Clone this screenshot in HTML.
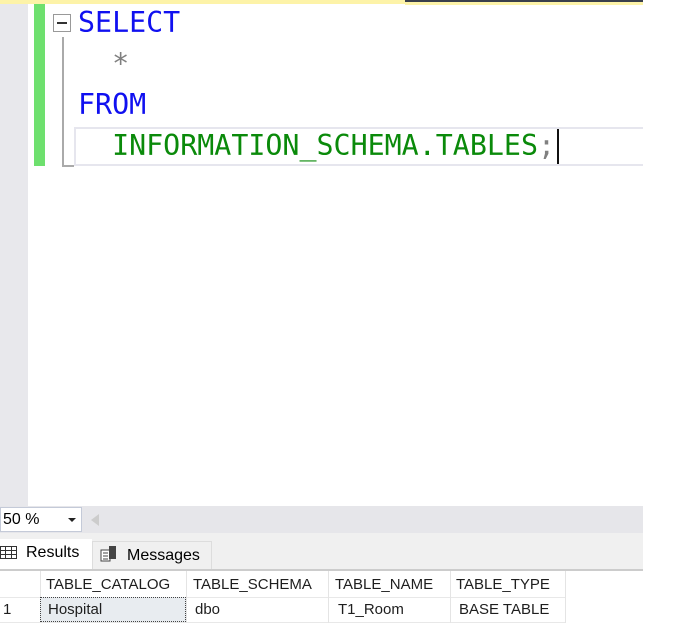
<!DOCTYPE html>
<html><head><style>
body{margin:0;width:678px;height:640px;background:#fff;position:relative;overflow:hidden;font-family:"Liberation Sans",sans-serif}
.a{position:absolute}
.code{font-family:"DejaVu Sans Mono","Liberation Mono",monospace;font-size:28.3px;white-space:pre;line-height:41px}
.cell{position:absolute;font-size:15px;color:#1e1e1e;line-height:25px}
</style></head><body>
<div class="a" style="left:0;top:0;width:405px;height:4px;background:#fdf3a8"></div>
<div class="a" style="left:405px;top:0;width:238px;height:2px;background:#3a3f4b"></div>
<div class="a" style="left:405px;top:2px;width:238px;height:3px;background:#fdf3a8"></div>
<div class="a" style="left:0;top:4px;width:28px;height:502px;background:#e8e8ec"></div>
<div class="a" style="left:34px;top:4px;width:11px;height:162px;background:#6ee06e"></div>
<div class="a" style="left:53px;top:14px;width:18px;height:18px;border:1px solid #999;box-sizing:border-box;background:#fff"></div>
<div class="a" style="left:57px;top:22px;width:10px;height:2px;background:#333"></div>
<div class="a" style="left:62px;top:37px;width:1.5px;height:129px;background:#aaa"></div>
<div class="a" style="left:62px;top:165px;width:12px;height:1.5px;background:#aaa"></div>
<div class="a" style="left:74px;top:127px;width:575px;height:39px;border:2px solid #e6e6ee;border-right:none;box-sizing:border-box;width:569px"></div>
<div class="a code" style="left:78px;top:2px;color:#1010f0">SELECT</div>
<div class="a code" style="left:78px;top:43px;color:#808080">  *</div>
<div class="a code" style="left:78px;top:84px;color:#1010f0">FROM</div>
<div class="a code" style="left:78px;top:125px;color:#0a8a0a">  INFORMATION_SCHEMA.TABLES<span style="color:#808080">;</span></div>
<div class="a" style="left:557px;top:129px;width:2px;height:35px;background:#111"></div>
<div class="a" style="left:0;top:506px;width:643px;height:27px;background:#e6e6ea"></div>
<div class="a" style="left:0;top:507px;width:82px;height:25px;background:#fff;border:1px solid #c4cad8;box-sizing:border-box;font-size:16px;line-height:23px;padding-left:2px">50 %</div>
<div class="a" style="left:68px;top:518px;border-left:4px solid transparent;border-right:4px solid transparent;border-top:4px solid #222"></div>
<div class="a" style="left:91px;top:514px;border-top:6px solid transparent;border-bottom:6px solid transparent;border-right:8px solid #ccc"></div>
<div class="a" style="left:0;top:533px;width:643px;height:36px;background:#f0f0f0"></div>
<div class="a" style="left:0;top:539px;width:92px;height:30px;background:#fff;font-size:16px;line-height:28px;padding-left:26px;box-sizing:border-box">Results</div>
<svg class="a" style="left:0;top:546px" width="18" height="14"><rect x="0.5" y="0.5" width="16" height="12" fill="#fff" stroke="#333"/><path d="M0 4.5H17M0 8.5H17M5.5 0V13M11.5 0V13" stroke="#333"/></svg>
<div class="a" style="left:92px;top:541px;width:120px;height:28px;border:1px solid #ddd;border-bottom:none;box-sizing:border-box;font-size:16px;line-height:28px;padding-left:34px">Messages</div>
<svg class="a" style="left:100px;top:545px" width="18" height="18"><rect x="1" y="5" width="9" height="11" fill="#fff" stroke="#444"/><path d="M3 8H8M3 11H8M3 14H8" stroke="#444"/><rect x="9" y="1" width="7" height="13" fill="#444"/></svg>
<div class="a" style="left:0;top:569px;width:643px;height:2px;background:#ccc"></div>
<div class="a" style="left:0;top:597px;width:565px;height:1px;background:#e8e8e8"></div>
<div class="a" style="left:0;top:622px;width:565px;height:1px;background:#e8e8e8"></div>
<div class="a" style="left:40px;top:571px;width:1px;height:52px;background:#e4e4e4"></div>
<div class="a" style="left:186px;top:571px;width:1px;height:52px;background:#e4e4e4"></div>
<div class="a" style="left:328px;top:571px;width:1px;height:52px;background:#e4e4e4"></div>
<div class="a" style="left:450px;top:571px;width:1px;height:52px;background:#e4e4e4"></div>
<div class="a" style="left:565px;top:571px;width:1px;height:52px;background:#e4e4e4"></div>
<div class="a" style="left:40px;top:597px;width:146px;height:25px;background:#e8ecf0;border:1px dotted #444;box-sizing:border-box"></div>
<div class="cell" style="left:46px;top:572px">TABLE_CATALOG</div>
<div class="cell" style="left:193px;top:572px">TABLE_SCHEMA</div>
<div class="cell" style="left:335px;top:572px">TABLE_NAME</div>
<div class="cell" style="left:456px;top:572px">TABLE_TYPE</div>
<div class="cell" style="left:3px;top:597px">1</div>
<div class="cell" style="left:48px;top:597px">Hospital</div>
<div class="cell" style="left:195px;top:597px">dbo</div>
<div class="cell" style="left:338px;top:597px">T1_Room</div>
<div class="cell" style="left:459px;top:597px">BASE TABLE</div>
</body></html>
